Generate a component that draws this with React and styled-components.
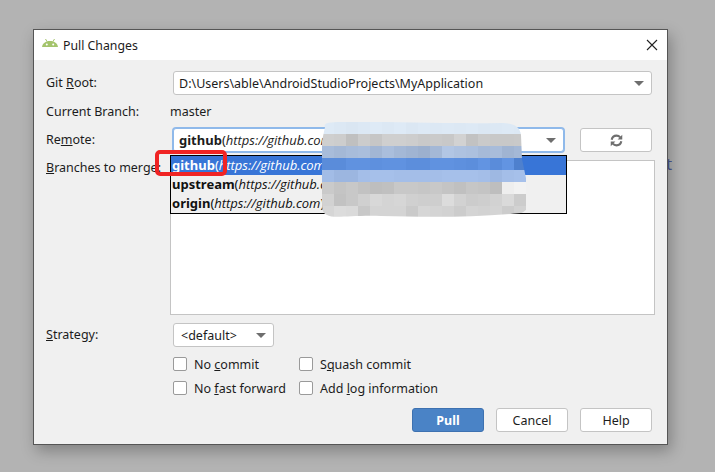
import React from 'react'
import styled, { createGlobalStyle } from 'styled-components'

const MOSAIC_ROWS = [
  { color: [220, 232, 244], shift: [2, 0, -2, 0, 2, 0, 2, -1, 1, 0, 1, 0, 1, -1, 0, 1, 0] },
  { color: [204, 204, 204], shift: [3, 1, -12, 0, -6, 3, 3, 1, -3, -2, -4, 6, -10, -2, -4, -4, -3] },
  { color: [170, 190, 220], shift: [-2, -6, -2, 0, -8, 0, -6, -10, -14, -6, 8, 4, 2, -4, -2, -10, -6] },
  { color: [94, 144, 222], shift: [-4, -4, 2, 2, 0, 2, 2, -2, -2, 2, 2, 0, -2, 4, -4, 4, -16] },
  { color: [164, 190, 232], shift: [-2, -8, -8, 0, 2, 2, 0, 0, 0, 0, 2, 2, 2, 0, -6, 0, 2] },
  { color: [198, 198, 198], shift: [4, -2, 2, -4, -8, -6, 2, 2, 0, 2, -2, -6, 0, -2, -8, 40, 44] },
  { color: [206, 206, 206], shift: [4, -12, -6, 2, 10, 6, 8, 2, 0, 0, 14, 4, -2, 0, 4, 12, -2] },
  { color: [214, 214, 214], shift: [0, 6, 4, -14, -2, -2, -2, -12, 0, -2, -4, -10, -2, -4, -2, -10, -4] },
]

const GlobalStyle = createGlobalStyle`
  html, body {
    margin: 0;
    height: 472px;
    overflow: hidden;
    background: #b3b3b3;
    font-family: "Noto Sans", "Liberation Sans", sans-serif;
    font-size: 12.5px;
    color: #1c1c1c;
  }
`

const Page = styled.div`
  position: relative;
  height: 472px;
  padding: 29px 0 0 33px;
  box-sizing: border-box;
`

const BackdropLetter = styled.span`
  position: absolute;
  left: 666px;
  top: 152px;
  font-size: 17px;
  color: #4c5a94;
`

const Dialog = styled.div`
  position: relative;
  width: 635px;
  height: 416px;
  box-sizing: border-box;
  border: 1px solid #555;
  background: #f0f0f0;
  box-shadow: 3px 6px 14px rgba(0, 0, 0, 0.28);
`

const TitleBar = styled.div`
  display: flex;
  align-items: center;
  gap: 5px;
  height: 30px;
  padding: 0 8px;
  background: #fff;
`

const Title = styled.span`
  flex: 1;
  font-size: 12.3px;
`

const CloseButton = styled.svg`
  width: 12px;
  height: 12px;
  margin-right: 1px;
`

const Form = styled.div`
  display: grid;
  grid-template-columns: 127px 1fr;
  padding: 11px 15px 0 12px;
`

const Label = styled.div`
  height: ${p => p.$h || 24}px;
  line-height: ${p => p.$h || 24}px;
  margin-top: ${p => p.$top || 0}px;
  white-space: nowrap;
`

const Field = styled.div`
  display: flex;
  align-items: center;
  gap: 16px;
  height: ${p => p.$h || 24}px;
  margin-left: ${p => p.$inset ?? 0}px;
  margin-top: ${p => p.$top || 0}px;
`

const ComboBox = styled.div`
  flex: ${p => (p.$width ? 'none' : 1)};
  width: ${p => (p.$width ? `${p.$width}px` : 'auto')};
  height: 24px;
  display: flex;
  align-items: center;
  justify-content: space-between;
  box-sizing: border-box;
  padding: 0 6px 0 ${p => p.$pad || 5}px;
  background: #fff;
  border: 1px solid ${p => (p.$focused ? '#8fb9ea' : '#c4c4c4')};
  border-radius: 3px;
  box-shadow: ${p => (p.$focused ? '0 0 0 1px #8fb9ea' : 'none')};
  white-space: nowrap;
  overflow: hidden;
`

const Arrow = styled.span`
  flex: none;
  width: 0;
  height: 0;
  border-left: 5px solid transparent;
  border-right: 5px solid transparent;
  border-top: 5px solid #6e6e6e;
  margin-right: 1px;
`

const RemoteText = styled.span`
  font-size: 13px;
`

const Remote = styled.b`
  font-weight: 700;
`

const Url = styled.i`
  font-family: "Open Sans", "Noto Sans", sans-serif;
  font-style: italic;
`

const Button = styled.button`
  width: 72px;
  height: 24px;
  padding: 0;
  display: flex;
  align-items: center;
  justify-content: center;
  box-sizing: border-box;
  font: inherit;
  color: ${p => (p.$primary ? '#fff' : '#1c1c1c')};
  font-weight: ${p => (p.$primary ? 700 : 400)};
  background: ${p => (p.$primary ? '#4a83c6' : '#fff')};
  border: 1px solid ${p => (p.$primary ? '#3d71b0' : '#c4c4c4')};
  border-radius: 3px;
`

const BranchList = styled.div`
  height: 155px;
  margin: 8px -3px 8px -3px;
  box-sizing: border-box;
  background: #fff;
  border: 1px solid #c4c4c4;
`

const Checks = styled.div`
  display: grid;
  grid-template-columns: 126px auto;
  justify-content: start;
  row-gap: 10px;
  margin-top: 10px;
`

const Check = styled.label`
  display: flex;
  align-items: center;
  gap: 7px;
  height: 14px;
  white-space: nowrap;
`

const Box = styled.span`
  width: 14px;
  height: 14px;
  box-sizing: border-box;
  background: #fff;
  border: 1px solid #9a9a9a;
  border-radius: 2px;
`

const Footer = styled.div`
  display: flex;
  justify-content: flex-end;
  gap: 12px;
  padding: 13px 15px 0 0;
`

const Popup = styled.ul`
  position: absolute;
  left: 136px;
  top: 125px;
  width: 397px;
  height: 59px;
  margin: 0;
  padding: 0;
  box-sizing: border-box;
  list-style: none;
  font-size: 13px;
  background: #f0f0f0;
  border: 1px solid #000;
`

const PopupItem = styled.li`
  height: 19px;
  line-height: 19px;
  padding-left: 1px;
  white-space: nowrap;
  color: ${p => (p.$selected ? '#fff' : '#111')};
  background: ${p => (p.$selected ? '#3875d7' : 'transparent')};
`

const Highlight = styled.div`
  position: absolute;
  left: 121px;
  top: 120px;
  width: 72px;
  height: 26px;
  box-sizing: border-box;
  border: 4px solid #f02424;
  border-radius: 5px;
`

const Mosaic = styled.svg`
  position: absolute;
  left: 287px;
  top: 91px;
`

function AndroidIcon() {
  return (
    <svg width="16" height="12" viewBox="0 1 16 12">
      <path d="M0 9C.4 5.4 3.6 3 8 3s7.6 2.4 8 6Z" fill="#a4c46c" />
      <path d="M3.5 1 5.2 3.8M12.5 1 10.8 3.8" stroke="#a4c46c" strokeWidth="1" />
      <circle cx="4.8" cy="6.4" r="1" fill="#fff" />
      <circle cx="11.2" cy="6.4" r="1" fill="#fff" />
    </svg>
  )
}

function RefreshIcon() {
  return (
    <svg width="13" height="13" viewBox="0 0 14 14" fill="none" stroke="#6e6e6e" strokeWidth="2.3">
      <path d="M1.8 6.2C2.4 3.6 4.5 1.8 7 1.8c1.6 0 3 .7 4 1.9" />
      <path d="M12.2 7.8c-.6 2.6-2.7 4.4-5.2 4.4-1.6 0-3-.7-4-1.9" />
      <path d="M13.2.8v5H8.2Z" fill="#6e6e6e" stroke="none" />
      <path d="M.8 13.2v-5h5Z" fill="#6e6e6e" stroke="none" />
    </svg>
  )
}

function MosaicPatch() {
  return (
    <Mosaic width="212" height="98" viewBox="0 0 212 98">
      <defs>
        <clipPath id="blob">
          <path d="M4 6C2 2 8 1 20 1C60 0 120 3 180 2C192 2 199 5 200 14L201 38L206 62L209 74C210 84 206 90 200 92C150 97 100 96 60 95C30 94 12 98 6 94C2 92 1 90 1 80L1 20Z" />
        </clipPath>
      </defs>
      <g clipPath="url(#blob)">
        {MOSAIC_ROWS.map((row, r) =>
          row.shift.map((s, c) => (
            <rect
              key={`${r}-${c}`}
              x={c * 12 + 1}
              y={r * 12 + 1}
              width="12"
              height="12"
              fill={`rgb(${row.color.map(v => Math.min(255, v + s)).join(',')})`}
            />
          ))
        )}
      </g>
    </Mosaic>
  )
}

export default function App() {
  return (
    <Page>
      <GlobalStyle />
      <BackdropLetter>t</BackdropLetter>
      <Dialog>
        <TitleBar>
          <AndroidIcon />
          <Title>Pull Changes</Title>
          <CloseButton viewBox="0 0 12 12">
            <path d="M1 1 11 11M11 1 1 11" stroke="#222" strokeWidth="1.1" fill="none" />
          </CloseButton>
        </TitleBar>
        <Form>
          <Label>Git <u>R</u>oot:</Label>
          <Field>
            <ComboBox>
              D:\Users\able\AndroidStudioProjects\MyApplication
              <Arrow />
            </ComboBox>
          </Field>

          <Label $h={17} $top={8}>Current Branch:</Label>
          <Field $h={17} $inset={-3} $top={8}>master</Field>

          <Label $top={8}>Re<u>m</u>ote:</Label>
          <Field $top={8}>
            <ComboBox $focused $width={391}>
              <RemoteText><Remote>github</Remote>(<Url>https://github.com</Url>)</RemoteText>
              <Arrow />
            </ComboBox>
            <Button><RefreshIcon /></Button>
          </Field>

          <Label $h={18} $top={7}><u>B</u>ranches to merge:</Label>
          <BranchList />

          <Label><u>S</u>trategy:</Label>
          <Field>
            <ComboBox $width={101} $pad={7}>
              &lt;default&gt;
              <Arrow />
            </ComboBox>
          </Field>

          <span />
          <Checks>
            <Check><Box /><span>No <u>c</u>ommit</span></Check>
            <Check><Box /><span>S<u>q</u>uash commit</span></Check>
            <Check><Box /><span>No <u>f</u>ast forward</span></Check>
            <Check><Box /><span>Add <u>l</u>og information</span></Check>
          </Checks>
        </Form>
        <Footer>
          <Button $primary>Pull</Button>
          <Button>Cancel</Button>
          <Button>Help</Button>
        </Footer>
        <Popup>
          <PopupItem $selected><Remote>github</Remote>(<Url>https://github.com</Url>)</PopupItem>
          <PopupItem><Remote>upstream</Remote>(<Url>https://github.com</Url>)</PopupItem>
          <PopupItem><Remote>origin</Remote>(<Url>https://github.com</Url>)</PopupItem>
        </Popup>
        <MosaicPatch />
        <Highlight />
      </Dialog>
    </Page>
  )
}
